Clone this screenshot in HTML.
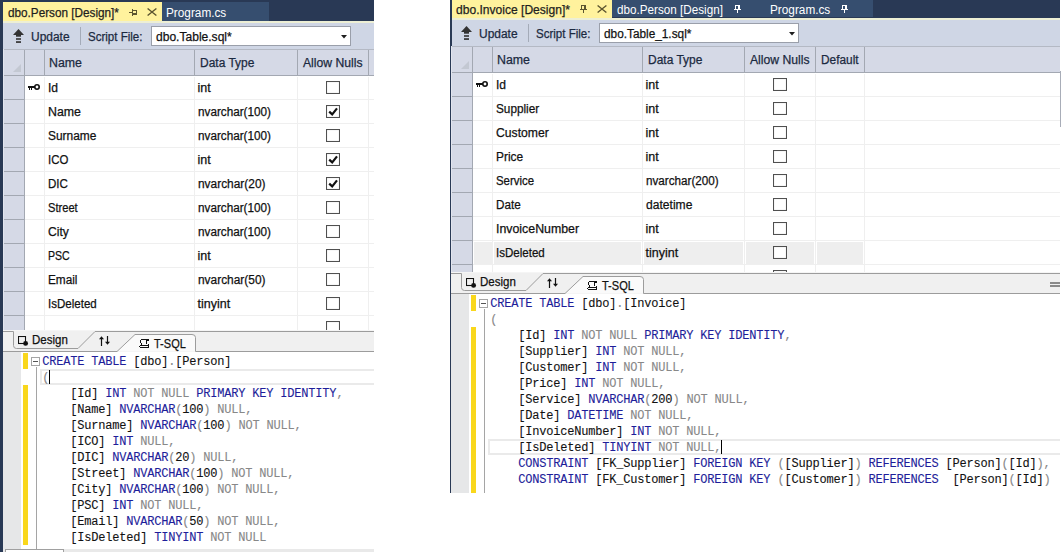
<!DOCTYPE html>
<html><head><meta charset="utf-8"><style>
html,body{margin:0;padding:0;background:#fff;}
body{width:1061px;height:552px;position:relative;overflow:hidden;}
body>div,body>svg{position:absolute;}
.t{white-space:pre;transform-origin:0 0;-webkit-text-stroke:0.25px currentColor;}
.c{white-space:pre;font-family:'Liberation Mono', monospace;font-size:12px;letter-spacing:-0.2px;line-height:16px;height:16px;-webkit-text-stroke:0.1px currentColor;}
</style></head><body>
<div style="left:0px;top:0px;width:374px;height:552px;background:#293955;"></div>
<div style="left:3px;top:2px;width:159px;height:21px;background:#FFF29D;"></div>
<div style="left:3px;top:21px;width:371px;height:2px;background:#EDEFD5;"></div>
<div class="t" style="left:7.5px;top:7.42px;font-size:12.5px;line-height:12.5px;color:#1E1E1E;font-family:'Liberation Sans', sans-serif;transform:scaleX(0.939);">dbo.Person [Design]*</div>
<svg style="left:129px;top:9px" width="8" height="7" viewBox="0 0 8 7" shape-rendering="crispEdges" fill="#5C5530"><rect x="0" y="3" width="3" height="1"/><rect x="3" y="0" width="1" height="7"/><rect x="4" y="1" width="4" height="1"/><rect x="7" y="1" width="1" height="5"/><rect x="4" y="4" width="4" height="2"/></svg>
<svg style="left:147px;top:8px" width="10" height="8" viewBox="0 0 10 8"><path d="M0.6 0.5 L9.4 7.5 M9.4 0.5 L0.6 7.5" fill="none" stroke="#5C5530" stroke-width="1.35"/></svg>
<div style="left:162px;top:2px;width:107px;height:19px;background:#364E6F;"></div>
<div class="t" style="left:165.8px;top:7.42px;font-size:12.5px;line-height:12.5px;color:#FFFFFF;font-family:'Liberation Sans', sans-serif;transform:scaleX(0.943);-webkit-text-stroke:0">Program.cs</div>
<div style="left:3px;top:23px;width:371px;height:26px;background:#CFD6E5;"></div>
<svg style="left:13px;top:29px" width="12" height="15" viewBox="0 0 12 15"><path d="M5.5 0 L11 6 L0 6 Z" fill="#333"/><rect x="3" y="5.5" width="5" height="2.2" fill="#333"/><rect x="3" y="9.2" width="5" height="1.6" fill="#333"/><rect x="3" y="12.2" width="5" height="1.7" fill="#333"/></svg>
<div class="t" style="left:30.7px;top:31.42px;font-size:12.5px;line-height:12.5px;color:#1B2940;font-family:'Liberation Sans', sans-serif;transform:scaleX(0.956);">Update</div>
<div style="left:80px;top:27px;width:1px;height:18px;background:#A4ABB8;"></div>
<div class="t" style="left:88.4px;top:31.42px;font-size:12.5px;line-height:12.5px;color:#1B2940;font-family:'Liberation Sans', sans-serif;transform:scaleX(0.923);">Script File:</div>
<div style="left:151px;top:26px;width:200px;height:20px;background:#fff;border:1px solid #9A9FAA;box-sizing:border-box"></div>
<div class="t" style="left:155.5px;top:31.42px;font-size:12.5px;line-height:12.5px;color:#111;font-family:'Liberation Sans', sans-serif;transform:scaleX(0.964);">dbo.Table.sql*</div>
<svg style="left:341px;top:35px" width="6" height="3.5" viewBox="0 0 6 3.5"><path d="M0 0 H6 L3 3.5 Z" fill="#1E1E1E"/></svg>
<div style="left:3px;top:49px;width:371px;height:27px;background:#D5D9E6;"></div>
<div style="left:3px;top:49px;width:371px;height:1px;background:#B4B9C4;"></div>
<div style="left:3px;top:75px;width:371px;height:1px;background:#A3A8B2;"></div>
<div style="left:3px;top:76px;width:371px;height:254px;background:#fff;"></div>
<div style="left:3px;top:76px;width:21px;height:254px;background:#D5D9E6;"></div>
<div style="left:24px;top:50px;width:1px;height:280px;background:#A3A8B2;"></div>
<div style="left:44px;top:50px;width:1px;height:25px;background:#A3A8B2;"></div>
<svg style="left:13px;top:64px" width="8" height="8" viewBox="0 0 8 8"><path d="M8 0 V8 H0 Z" fill="#C3C8D2"/></svg>
<div style="left:194px;top:50px;width:1px;height:25px;background:#A3A8B2;"></div>
<div style="left:194px;top:77px;width:1px;height:253px;background:#EFEFEF;"></div>
<div class="t" style="left:49.2px;top:57.12px;font-size:12.5px;line-height:12.5px;color:#1B2940;font-family:'Liberation Sans', sans-serif;transform:scaleX(0.988);">Name</div>
<div style="left:297px;top:50px;width:1px;height:25px;background:#A3A8B2;"></div>
<div style="left:297px;top:77px;width:1px;height:253px;background:#EFEFEF;"></div>
<div class="t" style="left:199.6px;top:57.12px;font-size:12.5px;line-height:12.5px;color:#1B2940;font-family:'Liberation Sans', sans-serif;transform:scaleX(0.958);">Data Type</div>
<div style="left:368px;top:50px;width:1px;height:25px;background:#A3A8B2;"></div>
<div style="left:368px;top:77px;width:1px;height:253px;background:#EFEFEF;"></div>
<div class="t" style="left:302.5px;top:57.12px;font-size:12.5px;line-height:12.5px;color:#1B2940;font-family:'Liberation Sans', sans-serif;transform:scaleX(0.974);">Allow Nulls</div>
<div style="left:44px;top:77px;width:1px;height:253px;background:#EFEFEF;"></div>
<div style="left:3px;top:99px;width:21px;height:1px;background:#A3A8B2;"></div>
<div style="left:25px;top:99px;width:349px;height:1px;background:#EFEFEF;"></div>
<div style="left:3px;top:123px;width:21px;height:1px;background:#A3A8B2;"></div>
<div style="left:25px;top:123px;width:349px;height:1px;background:#EFEFEF;"></div>
<div style="left:3px;top:147px;width:21px;height:1px;background:#A3A8B2;"></div>
<div style="left:25px;top:147px;width:349px;height:1px;background:#EFEFEF;"></div>
<div style="left:3px;top:171px;width:21px;height:1px;background:#A3A8B2;"></div>
<div style="left:25px;top:171px;width:349px;height:1px;background:#EFEFEF;"></div>
<div style="left:3px;top:195px;width:21px;height:1px;background:#A3A8B2;"></div>
<div style="left:25px;top:195px;width:349px;height:1px;background:#EFEFEF;"></div>
<div style="left:3px;top:219px;width:21px;height:1px;background:#A3A8B2;"></div>
<div style="left:25px;top:219px;width:349px;height:1px;background:#EFEFEF;"></div>
<div style="left:3px;top:243px;width:21px;height:1px;background:#A3A8B2;"></div>
<div style="left:25px;top:243px;width:349px;height:1px;background:#EFEFEF;"></div>
<div style="left:3px;top:267px;width:21px;height:1px;background:#A3A8B2;"></div>
<div style="left:25px;top:267px;width:349px;height:1px;background:#EFEFEF;"></div>
<div style="left:3px;top:291px;width:21px;height:1px;background:#A3A8B2;"></div>
<div style="left:25px;top:291px;width:349px;height:1px;background:#EFEFEF;"></div>
<div style="left:3px;top:315px;width:21px;height:1px;background:#A3A8B2;"></div>
<div style="left:25px;top:315px;width:349px;height:1px;background:#EFEFEF;"></div>
<svg style="left:28px;top:84px" width="13" height="7" viewBox="0 0 13 7"><rect x="0" y="2" width="7" height="2" fill="#111"/><rect x="1" y="4" width="1" height="2" fill="#111"/><rect x="3" y="4" width="1" height="2" fill="#111"/><circle cx="9" cy="3" r="2.2" fill="none" stroke="#111" stroke-width="1.6"/></svg>
<div class="t" style="left:47.8px;top:81.52px;font-size:12.5px;line-height:12.5px;color:#111;font-family:'Liberation Sans', sans-serif;transform:scaleX(0.967);">Id</div>
<div class="t" style="left:197.5px;top:81.52px;font-size:12.5px;line-height:12.5px;color:#111;font-family:'Liberation Sans', sans-serif;transform:scaleX(1.0);">int</div>
<svg style="left:326px;top:81px" width="14" height="13" viewBox="0 0 14 13"><rect x="0.5" y="0.5" width="13" height="12" fill="#fff" stroke="#505050" stroke-width="1.1"/></svg>
<div class="t" style="left:47.8px;top:105.52px;font-size:12.5px;line-height:12.5px;color:#111;font-family:'Liberation Sans', sans-serif;transform:scaleX(0.988);">Name</div>
<div class="t" style="left:197.5px;top:105.52px;font-size:12.5px;line-height:12.5px;color:#111;font-family:'Liberation Sans', sans-serif;transform:scaleX(0.938);">nvarchar(100)</div>
<svg style="left:326px;top:105px" width="14" height="13" viewBox="0 0 14 13"><rect x="0.5" y="0.5" width="13" height="12" fill="#fff" stroke="#505050" stroke-width="1.1"/><path d="M3.2 6.6 L6.2 9.4 L11 3.4" fill="none" stroke="#111" stroke-width="2.2"/></svg>
<div class="t" style="left:47.8px;top:129.52px;font-size:12.5px;line-height:12.5px;color:#111;font-family:'Liberation Sans', sans-serif;transform:scaleX(0.953);">Surname</div>
<div class="t" style="left:197.5px;top:129.52px;font-size:12.5px;line-height:12.5px;color:#111;font-family:'Liberation Sans', sans-serif;transform:scaleX(0.938);">nvarchar(100)</div>
<svg style="left:326px;top:129px" width="14" height="13" viewBox="0 0 14 13"><rect x="0.5" y="0.5" width="13" height="12" fill="#fff" stroke="#505050" stroke-width="1.1"/></svg>
<div class="t" style="left:47.8px;top:153.52px;font-size:12.5px;line-height:12.5px;color:#111;font-family:'Liberation Sans', sans-serif;transform:scaleX(0.914);">ICO</div>
<div class="t" style="left:197.5px;top:153.52px;font-size:12.5px;line-height:12.5px;color:#111;font-family:'Liberation Sans', sans-serif;transform:scaleX(1.0);">int</div>
<svg style="left:326px;top:153px" width="14" height="13" viewBox="0 0 14 13"><rect x="0.5" y="0.5" width="13" height="12" fill="#fff" stroke="#505050" stroke-width="1.1"/><path d="M3.2 6.6 L6.2 9.4 L11 3.4" fill="none" stroke="#111" stroke-width="2.2"/></svg>
<div class="t" style="left:47.8px;top:177.52px;font-size:12.5px;line-height:12.5px;color:#111;font-family:'Liberation Sans', sans-serif;transform:scaleX(0.925);">DIC</div>
<div class="t" style="left:197.5px;top:177.52px;font-size:12.5px;line-height:12.5px;color:#111;font-family:'Liberation Sans', sans-serif;transform:scaleX(0.952);">nvarchar(20)</div>
<svg style="left:326px;top:177px" width="14" height="13" viewBox="0 0 14 13"><rect x="0.5" y="0.5" width="13" height="12" fill="#fff" stroke="#505050" stroke-width="1.1"/><path d="M3.2 6.6 L6.2 9.4 L11 3.4" fill="none" stroke="#111" stroke-width="2.2"/></svg>
<div class="t" style="left:47.8px;top:201.52px;font-size:12.5px;line-height:12.5px;color:#111;font-family:'Liberation Sans', sans-serif;transform:scaleX(0.891);">Street</div>
<div class="t" style="left:197.5px;top:201.52px;font-size:12.5px;line-height:12.5px;color:#111;font-family:'Liberation Sans', sans-serif;transform:scaleX(0.938);">nvarchar(100)</div>
<svg style="left:326px;top:201px" width="14" height="13" viewBox="0 0 14 13"><rect x="0.5" y="0.5" width="13" height="12" fill="#fff" stroke="#505050" stroke-width="1.1"/></svg>
<div class="t" style="left:47.8px;top:225.52px;font-size:12.5px;line-height:12.5px;color:#111;font-family:'Liberation Sans', sans-serif;transform:scaleX(0.967);">City</div>
<div class="t" style="left:197.5px;top:225.52px;font-size:12.5px;line-height:12.5px;color:#111;font-family:'Liberation Sans', sans-serif;transform:scaleX(0.938);">nvarchar(100)</div>
<svg style="left:326px;top:225px" width="14" height="13" viewBox="0 0 14 13"><rect x="0.5" y="0.5" width="13" height="12" fill="#fff" stroke="#505050" stroke-width="1.1"/></svg>
<div class="t" style="left:47.8px;top:249.52px;font-size:12.5px;line-height:12.5px;color:#111;font-family:'Liberation Sans', sans-serif;transform:scaleX(0.846);">PSC</div>
<div class="t" style="left:197.5px;top:249.52px;font-size:12.5px;line-height:12.5px;color:#111;font-family:'Liberation Sans', sans-serif;transform:scaleX(1.0);">int</div>
<svg style="left:326px;top:249px" width="14" height="13" viewBox="0 0 14 13"><rect x="0.5" y="0.5" width="13" height="12" fill="#fff" stroke="#505050" stroke-width="1.1"/></svg>
<div class="t" style="left:47.8px;top:273.52px;font-size:12.5px;line-height:12.5px;color:#111;font-family:'Liberation Sans', sans-serif;transform:scaleX(0.943);">Email</div>
<div class="t" style="left:197.5px;top:273.52px;font-size:12.5px;line-height:12.5px;color:#111;font-family:'Liberation Sans', sans-serif;transform:scaleX(0.952);">nvarchar(50)</div>
<svg style="left:326px;top:273px" width="14" height="13" viewBox="0 0 14 13"><rect x="0.5" y="0.5" width="13" height="12" fill="#fff" stroke="#505050" stroke-width="1.1"/></svg>
<div class="t" style="left:47.8px;top:297.52px;font-size:12.5px;line-height:12.5px;color:#111;font-family:'Liberation Sans', sans-serif;transform:scaleX(0.924);">IsDeleted</div>
<div class="t" style="left:197.5px;top:297.52px;font-size:12.5px;line-height:12.5px;color:#111;font-family:'Liberation Sans', sans-serif;transform:scaleX(1.0);">tinyint</div>
<svg style="left:326px;top:297px" width="14" height="13" viewBox="0 0 14 13"><rect x="0.5" y="0.5" width="13" height="12" fill="#fff" stroke="#505050" stroke-width="1.1"/></svg>
<svg style="left:326px;top:321px" width="14" height="9" viewBox="0 0 14 9"><rect x="0.5" y="0.5" width="13" height="12" fill="#fff" stroke="#505050" stroke-width="1.1"/></svg>
<svg style="left:3px;top:330px" width="371" height="22" viewBox="0 0 371 22"><rect x="0" y="0" width="371" height="22" fill="#F0F0F0"/><rect x="0" y="0" width="371" height="1" fill="#F5F5F5"/><path d="M114 21.5 L132 4.5 H189 Q192 4.5 192 7.5 V21.5 Z" fill="#FAFAFA" stroke="none"/><path d="M0 1.5 H10.5 V15.5 Q10.5 18.5 13.5 18.5 H75 L92 1.5 H371" fill="none" stroke="#9C9C9C" stroke-width="1"/><path d="M0 21.5 H114 L132 4.5 H189 Q192.5 4.5 192.5 7.5 V21.5 H371" fill="none" stroke="#9C9C9C" stroke-width="1"/></svg>
<svg style="left:18px;top:336px" width="11" height="11" viewBox="0 0 11 11"><rect x="0.5" y="0.5" width="7" height="7" fill="none" stroke="#111" stroke-width="1.1"/><circle cx="7.6" cy="7.4" r="2.45" fill="#111"/></svg>
<div class="t" style="left:31.5px;top:333.92px;font-size:12.5px;line-height:12.5px;color:#111;font-family:'Liberation Sans', sans-serif;transform:scaleX(0.92);">Design</div>
<svg style="left:98px;top:335px" width="12" height="11" viewBox="0 0 12 11"><path d="M3.5 3 V11" stroke="#111" stroke-width="1.2"/><path d="M1 4.2 L3.5 1.2 L6 4.2 Z" fill="#111"/><path d="M9.5 1 V8" stroke="#111" stroke-width="1.2"/><path d="M7 6.8 L9.5 9.8 L12 6.8 Z" fill="#111"/></svg>
<svg style="left:139px;top:339px" width="11" height="9" viewBox="0 0 11 9" shape-rendering="crispEdges" fill="#111"><rect x="2" y="0" width="8" height="1"/><rect x="1" y="1" width="1" height="3"/><rect x="2" y="4" width="1" height="2"/><rect x="7" y="1" width="1" height="4"/><rect x="8" y="1" width="2" height="1"/><rect x="9" y="5" width="1" height="3"/><rect x="1" y="6" width="8" height="1"/><rect x="0" y="7" width="1" height="1"/><rect x="1" y="8" width="9" height="1"/></svg>
<div class="t" style="left:153.5px;top:337.92px;font-size:12.5px;line-height:12.5px;color:#111;font-family:'Liberation Sans', sans-serif;transform:scaleX(0.881);">T-SQL</div>
<div style="left:3px;top:49px;width:1px;height:281px;background:#E2E5EE;"></div>
<div style="left:3px;top:352px;width:371px;height:197px;background:#fff;"></div>
<div style="left:3px;top:352px;width:18px;height:197px;background:#E6E7E8;"></div>
<div style="left:40px;top:369px;width:334px;height:16px;background:transparent;border:2px solid #EAEAEA;border-right:none;box-sizing:border-box"></div>
<div style="left:23px;top:353px;width:5px;height:16px;background:#F9D71C;"></div>
<div style="left:23px;top:385px;width:5px;height:160px;background:#F9D71C;"></div>
<svg style="left:31px;top:357px" width="9" height="192" viewBox="0 0 9 192"><rect x="0.5" y="0.5" width="8" height="8" fill="#fff" stroke="#A5A5A5"/><rect x="2" y="4" width="5" height="1" fill="#555"/><rect x="5" y="10" width="1" height="182" fill="#A5A5A5"/></svg>
<div class="c" style="left:42.3px;top:354.2px"><span style="color:#1E1E9A">CREATE TABLE </span><span style="color:#111111">[dbo]</span><span style="color:#888888">.</span><span style="color:#111111">[Person]</span></div>
<div class="c" style="left:42.3px;top:370.2px"><span style="color:#888888">(</span></div>
<div class="c" style="left:42.3px;top:386.2px"><span style="color:#111111">    [Id] </span><span style="color:#1E1E9A">INT </span><span style="color:#888888">NOT NULL </span><span style="color:#1E1E9A">PRIMARY KEY IDENTITY</span><span style="color:#888888">,</span></div>
<div class="c" style="left:42.3px;top:402.2px"><span style="color:#111111">    [Name] </span><span style="color:#1E1E9A">NVARCHAR</span><span style="color:#888888">(</span><span style="color:#111111">100</span><span style="color:#888888">) NULL,</span></div>
<div class="c" style="left:42.3px;top:418.2px"><span style="color:#111111">    [Surname] </span><span style="color:#1E1E9A">NVARCHAR</span><span style="color:#888888">(</span><span style="color:#111111">100</span><span style="color:#888888">) NOT NULL,</span></div>
<div class="c" style="left:42.3px;top:434.2px"><span style="color:#111111">    [ICO] </span><span style="color:#1E1E9A">INT </span><span style="color:#888888">NULL,</span></div>
<div class="c" style="left:42.3px;top:450.2px"><span style="color:#111111">    [DIC] </span><span style="color:#1E1E9A">NVARCHAR</span><span style="color:#888888">(</span><span style="color:#111111">20</span><span style="color:#888888">) NULL,</span></div>
<div class="c" style="left:42.3px;top:466.2px"><span style="color:#111111">    [Street] </span><span style="color:#1E1E9A">NVARCHAR</span><span style="color:#888888">(</span><span style="color:#111111">100</span><span style="color:#888888">) NOT NULL,</span></div>
<div class="c" style="left:42.3px;top:482.2px"><span style="color:#111111">    [City] </span><span style="color:#1E1E9A">NVARCHAR</span><span style="color:#888888">(</span><span style="color:#111111">100</span><span style="color:#888888">) NOT NULL,</span></div>
<div class="c" style="left:42.3px;top:498.2px"><span style="color:#111111">    [PSC] </span><span style="color:#1E1E9A">INT </span><span style="color:#888888">NOT NULL,</span></div>
<div class="c" style="left:42.3px;top:514.2px"><span style="color:#111111">    [Email] </span><span style="color:#1E1E9A">NVARCHAR</span><span style="color:#888888">(</span><span style="color:#111111">50</span><span style="color:#888888">) NOT NULL,</span></div>
<div class="c" style="left:42.3px;top:530.2px"><span style="color:#111111">    [IsDeleted] </span><span style="color:#1E1E9A">TINYINT </span><span style="color:#888888">NOT NULL</span></div>
<div style="left:49.3px;top:370px;width:1px;height:14px;background:#000;"></div>
<div style="left:3px;top:549px;width:371px;height:3px;background:#E9E9E9;"></div>
<div style="left:5px;top:549px;width:59px;height:3px;background:#fff;border:1px solid #A0A0A0;border-bottom:none;box-sizing:border-box"></div>
<div style="left:450px;top:0px;width:610px;height:493px;background:#293955;"></div>
<div style="left:1060px;top:0px;width:1px;height:552px;background:#fff;"></div>
<div style="left:452px;top:0px;width:160px;height:18px;background:#FFF29D;"></div>
<div style="left:452px;top:18px;width:608px;height:2px;background:#EDEFD5;"></div>
<div class="t" style="left:455.5px;top:4.42px;font-size:12.5px;line-height:12.5px;color:#1E1E1E;font-family:'Liberation Sans', sans-serif;transform:scaleX(0.965);">dbo.Invoice [Design]*</div>
<svg style="left:580px;top:5px" width="7" height="8" viewBox="0 0 7 8" shape-rendering="crispEdges" fill="#5C5530"><rect x="1" y="0" width="5" height="1"/><rect x="1" y="0" width="1" height="4"/><rect x="4" y="0" width="2" height="4"/><rect x="0" y="4" width="7" height="1"/><rect x="3" y="5" width="1" height="3"/></svg>
<svg style="left:597px;top:5px" width="10" height="8" viewBox="0 0 10 8"><path d="M0.6 0.5 L9.4 7.5 M9.4 0.5 L0.6 7.5" fill="none" stroke="#5C5530" stroke-width="1.35"/></svg>
<div style="left:612px;top:0px;width:261px;height:17px;background:#364E6F;"></div>
<div class="t" style="left:617.0px;top:4.42px;font-size:12.5px;line-height:12.5px;color:#FFFFFF;font-family:'Liberation Sans', sans-serif;transform:scaleX(0.935);-webkit-text-stroke:0">dbo.Person [Design]</div>
<svg style="left:734px;top:5px" width="7" height="8" viewBox="0 0 7 8" shape-rendering="crispEdges" fill="#FFFFFF"><rect x="1" y="0" width="5" height="1"/><rect x="1" y="0" width="1" height="4"/><rect x="4" y="0" width="2" height="4"/><rect x="0" y="4" width="7" height="1"/><rect x="3" y="5" width="1" height="3"/></svg>
<div class="t" style="left:769.8px;top:4.42px;font-size:12.5px;line-height:12.5px;color:#FFFFFF;font-family:'Liberation Sans', sans-serif;transform:scaleX(0.943);-webkit-text-stroke:0">Program.cs</div>
<svg style="left:841px;top:5px" width="7" height="8" viewBox="0 0 7 8" shape-rendering="crispEdges" fill="#FFFFFF"><rect x="1" y="0" width="5" height="1"/><rect x="1" y="0" width="1" height="4"/><rect x="4" y="0" width="2" height="4"/><rect x="0" y="4" width="7" height="1"/><rect x="3" y="5" width="1" height="3"/></svg>
<div style="left:452px;top:20px;width:608px;height:26px;background:#CFD6E5;"></div>
<svg style="left:461px;top:26px" width="12" height="15" viewBox="0 0 12 15"><path d="M5.5 0 L11 6 L0 6 Z" fill="#333"/><rect x="3" y="5.5" width="5" height="2.2" fill="#333"/><rect x="3" y="9.2" width="5" height="1.6" fill="#333"/><rect x="3" y="12.2" width="5" height="1.7" fill="#333"/></svg>
<div class="t" style="left:478.7px;top:28.42px;font-size:12.5px;line-height:12.5px;color:#1B2940;font-family:'Liberation Sans', sans-serif;transform:scaleX(0.956);">Update</div>
<div style="left:528px;top:24px;width:1px;height:18px;background:#A4ABB8;"></div>
<div class="t" style="left:536.4px;top:28.42px;font-size:12.5px;line-height:12.5px;color:#1B2940;font-family:'Liberation Sans', sans-serif;transform:scaleX(0.923);">Script File:</div>
<div style="left:599px;top:23px;width:200px;height:20px;background:#fff;border:1px solid #9A9FAA;box-sizing:border-box"></div>
<div class="t" style="left:603.5px;top:28.42px;font-size:12.5px;line-height:12.5px;color:#111;font-family:'Liberation Sans', sans-serif;transform:scaleX(0.945);">dbo.Table_1.sql*</div>
<svg style="left:789px;top:32px" width="6" height="3.5" viewBox="0 0 6 3.5"><path d="M0 0 H6 L3 3.5 Z" fill="#1E1E1E"/></svg>
<div style="left:451px;top:46px;width:609px;height:27px;background:#D5D9E6;"></div>
<div style="left:451px;top:46px;width:609px;height:1px;background:#B4B9C4;"></div>
<div style="left:451px;top:72px;width:609px;height:1px;background:#A3A8B2;"></div>
<div style="left:451px;top:73px;width:609px;height:199px;background:#fff;"></div>
<div style="left:451px;top:73px;width:21px;height:199px;background:#D5D9E6;"></div>
<div style="left:472px;top:47px;width:1px;height:225px;background:#A3A8B2;"></div>
<div style="left:492px;top:47px;width:1px;height:25px;background:#A3A8B2;"></div>
<svg style="left:461px;top:61px" width="8" height="8" viewBox="0 0 8 8"><path d="M8 0 V8 H0 Z" fill="#C3C8D2"/></svg>
<div style="left:642px;top:47px;width:1px;height:25px;background:#A3A8B2;"></div>
<div style="left:642px;top:74px;width:1px;height:198px;background:#EFEFEF;"></div>
<div class="t" style="left:497.2px;top:54.12px;font-size:12.5px;line-height:12.5px;color:#1B2940;font-family:'Liberation Sans', sans-serif;transform:scaleX(0.988);">Name</div>
<div style="left:744px;top:47px;width:1px;height:25px;background:#A3A8B2;"></div>
<div style="left:744px;top:74px;width:1px;height:198px;background:#EFEFEF;"></div>
<div class="t" style="left:647.6px;top:54.12px;font-size:12.5px;line-height:12.5px;color:#1B2940;font-family:'Liberation Sans', sans-serif;transform:scaleX(0.958);">Data Type</div>
<div style="left:815px;top:47px;width:1px;height:25px;background:#A3A8B2;"></div>
<div style="left:815px;top:74px;width:1px;height:198px;background:#EFEFEF;"></div>
<div class="t" style="left:749.6px;top:54.12px;font-size:12.5px;line-height:12.5px;color:#1B2940;font-family:'Liberation Sans', sans-serif;transform:scaleX(0.974);">Allow Nulls</div>
<div style="left:864px;top:47px;width:1px;height:25px;background:#A3A8B2;"></div>
<div style="left:864px;top:74px;width:1px;height:198px;background:#EFEFEF;"></div>
<div class="t" style="left:820.8px;top:54.12px;font-size:12.5px;line-height:12.5px;color:#1B2940;font-family:'Liberation Sans', sans-serif;transform:scaleX(0.949);">Default</div>
<div style="left:492px;top:74px;width:1px;height:198px;background:#EFEFEF;"></div>
<div style="left:451px;top:96px;width:21px;height:1px;background:#A3A8B2;"></div>
<div style="left:473px;top:96px;width:587px;height:1px;background:#EFEFEF;"></div>
<div style="left:451px;top:120px;width:21px;height:1px;background:#A3A8B2;"></div>
<div style="left:473px;top:120px;width:587px;height:1px;background:#EFEFEF;"></div>
<div style="left:451px;top:144px;width:21px;height:1px;background:#A3A8B2;"></div>
<div style="left:473px;top:144px;width:587px;height:1px;background:#EFEFEF;"></div>
<div style="left:451px;top:168px;width:21px;height:1px;background:#A3A8B2;"></div>
<div style="left:473px;top:168px;width:587px;height:1px;background:#EFEFEF;"></div>
<div style="left:451px;top:192px;width:21px;height:1px;background:#A3A8B2;"></div>
<div style="left:473px;top:192px;width:587px;height:1px;background:#EFEFEF;"></div>
<div style="left:451px;top:216px;width:21px;height:1px;background:#A3A8B2;"></div>
<div style="left:473px;top:216px;width:587px;height:1px;background:#EFEFEF;"></div>
<div style="left:451px;top:240px;width:21px;height:1px;background:#A3A8B2;"></div>
<div style="left:473px;top:240px;width:587px;height:1px;background:#EFEFEF;"></div>
<div style="left:451px;top:264px;width:21px;height:1px;background:#A3A8B2;"></div>
<div style="left:473px;top:264px;width:587px;height:1px;background:#EFEFEF;"></div>
<svg style="left:476px;top:81px" width="13" height="7" viewBox="0 0 13 7"><rect x="0" y="2" width="7" height="2" fill="#111"/><rect x="1" y="4" width="1" height="2" fill="#111"/><rect x="3" y="4" width="1" height="2" fill="#111"/><circle cx="9" cy="3" r="2.2" fill="none" stroke="#111" stroke-width="1.6"/></svg>
<div class="t" style="left:495.8px;top:78.52px;font-size:12.5px;line-height:12.5px;color:#111;font-family:'Liberation Sans', sans-serif;transform:scaleX(0.967);">Id</div>
<div class="t" style="left:645.5px;top:78.52px;font-size:12.5px;line-height:12.5px;color:#111;font-family:'Liberation Sans', sans-serif;transform:scaleX(1.0);">int</div>
<svg style="left:773px;top:78px" width="14" height="13" viewBox="0 0 14 13"><rect x="0.5" y="0.5" width="13" height="12" fill="#fff" stroke="#505050" stroke-width="1.1"/></svg>
<div class="t" style="left:495.8px;top:102.52px;font-size:12.5px;line-height:12.5px;color:#111;font-family:'Liberation Sans', sans-serif;transform:scaleX(0.942);">Supplier</div>
<div class="t" style="left:645.5px;top:102.52px;font-size:12.5px;line-height:12.5px;color:#111;font-family:'Liberation Sans', sans-serif;transform:scaleX(1.0);">int</div>
<svg style="left:773px;top:102px" width="14" height="13" viewBox="0 0 14 13"><rect x="0.5" y="0.5" width="13" height="12" fill="#fff" stroke="#505050" stroke-width="1.1"/></svg>
<div class="t" style="left:495.8px;top:126.52px;font-size:12.5px;line-height:12.5px;color:#111;font-family:'Liberation Sans', sans-serif;transform:scaleX(0.975);">Customer</div>
<div class="t" style="left:645.5px;top:126.52px;font-size:12.5px;line-height:12.5px;color:#111;font-family:'Liberation Sans', sans-serif;transform:scaleX(1.0);">int</div>
<svg style="left:773px;top:126px" width="14" height="13" viewBox="0 0 14 13"><rect x="0.5" y="0.5" width="13" height="12" fill="#fff" stroke="#505050" stroke-width="1.1"/></svg>
<div class="t" style="left:495.8px;top:150.52px;font-size:12.5px;line-height:12.5px;color:#111;font-family:'Liberation Sans', sans-serif;transform:scaleX(0.952);">Price</div>
<div class="t" style="left:645.5px;top:150.52px;font-size:12.5px;line-height:12.5px;color:#111;font-family:'Liberation Sans', sans-serif;transform:scaleX(1.0);">int</div>
<svg style="left:773px;top:150px" width="14" height="13" viewBox="0 0 14 13"><rect x="0.5" y="0.5" width="13" height="12" fill="#fff" stroke="#505050" stroke-width="1.1"/></svg>
<div class="t" style="left:495.8px;top:174.52px;font-size:12.5px;line-height:12.5px;color:#111;font-family:'Liberation Sans', sans-serif;transform:scaleX(0.912);">Service</div>
<div class="t" style="left:645.5px;top:174.52px;font-size:12.5px;line-height:12.5px;color:#111;font-family:'Liberation Sans', sans-serif;transform:scaleX(0.934);">nvarchar(200)</div>
<svg style="left:773px;top:174px" width="14" height="13" viewBox="0 0 14 13"><rect x="0.5" y="0.5" width="13" height="12" fill="#fff" stroke="#505050" stroke-width="1.1"/></svg>
<div class="t" style="left:495.8px;top:198.52px;font-size:12.5px;line-height:12.5px;color:#111;font-family:'Liberation Sans', sans-serif;transform:scaleX(0.936);">Date</div>
<div class="t" style="left:645.5px;top:198.52px;font-size:12.5px;line-height:12.5px;color:#111;font-family:'Liberation Sans', sans-serif;transform:scaleX(0.967);">datetime</div>
<svg style="left:773px;top:198px" width="14" height="13" viewBox="0 0 14 13"><rect x="0.5" y="0.5" width="13" height="12" fill="#fff" stroke="#505050" stroke-width="1.1"/></svg>
<div class="t" style="left:495.8px;top:222.52px;font-size:12.5px;line-height:12.5px;color:#111;font-family:'Liberation Sans', sans-serif;transform:scaleX(0.988);">InvoiceNumber</div>
<div class="t" style="left:645.5px;top:222.52px;font-size:12.5px;line-height:12.5px;color:#111;font-family:'Liberation Sans', sans-serif;transform:scaleX(1.0);">int</div>
<svg style="left:773px;top:222px" width="14" height="13" viewBox="0 0 14 13"><rect x="0.5" y="0.5" width="13" height="12" fill="#fff" stroke="#505050" stroke-width="1.1"/></svg>
<div style="left:474px;top:242px;width:18px;height:22px;background:#EEEEEE;"></div>
<div style="left:494px;top:242px;width:147px;height:22px;background:#EEEEEE;"></div>
<div style="left:644px;top:242px;width:99px;height:22px;background:#EEEEEE;"></div>
<div style="left:746px;top:242px;width:68px;height:22px;background:#EEEEEE;"></div>
<div style="left:817px;top:242px;width:46px;height:22px;background:#EEEEEE;"></div>
<div class="t" style="left:495.8px;top:246.52px;font-size:12.5px;line-height:12.5px;color:#111;font-family:'Liberation Sans', sans-serif;transform:scaleX(0.924);">IsDeleted</div>
<div class="t" style="left:645.5px;top:246.52px;font-size:12.5px;line-height:12.5px;color:#111;font-family:'Liberation Sans', sans-serif;transform:scaleX(1.0);">tinyint</div>
<svg style="left:773px;top:246px" width="14" height="13" viewBox="0 0 14 13"><rect x="0.5" y="0.5" width="13" height="12" fill="#fff" stroke="#505050" stroke-width="1.1"/></svg>
<svg style="left:773px;top:270px" width="14" height="2" viewBox="0 0 14 2"><rect x="0.5" y="0.5" width="13" height="12" fill="#fff" stroke="#505050" stroke-width="1.1"/></svg>
<svg style="left:451px;top:272px" width="609" height="22" viewBox="0 0 609 22"><rect x="0" y="0" width="609" height="22" fill="#F0F0F0"/><rect x="0" y="0" width="609" height="1" fill="#F5F5F5"/><path d="M114 21.5 L132 4.5 H189 Q192 4.5 192 7.5 V21.5 Z" fill="#FAFAFA" stroke="none"/><path d="M0 1.5 H10.5 V15.5 Q10.5 18.5 13.5 18.5 H75 L92 1.5 H609" fill="none" stroke="#9C9C9C" stroke-width="1"/><path d="M0 21.5 H114 L132 4.5 H189 Q192.5 4.5 192.5 7.5 V21.5 H609" fill="none" stroke="#9C9C9C" stroke-width="1"/></svg>
<svg style="left:466px;top:278px" width="11" height="11" viewBox="0 0 11 11"><rect x="0.5" y="0.5" width="7" height="7" fill="none" stroke="#111" stroke-width="1.1"/><circle cx="7.6" cy="7.4" r="2.45" fill="#111"/></svg>
<div class="t" style="left:479.5px;top:275.92px;font-size:12.5px;line-height:12.5px;color:#111;font-family:'Liberation Sans', sans-serif;transform:scaleX(0.92);">Design</div>
<svg style="left:546px;top:277px" width="12" height="11" viewBox="0 0 12 11"><path d="M3.5 3 V11" stroke="#111" stroke-width="1.2"/><path d="M1 4.2 L3.5 1.2 L6 4.2 Z" fill="#111"/><path d="M9.5 1 V8" stroke="#111" stroke-width="1.2"/><path d="M7 6.8 L9.5 9.8 L12 6.8 Z" fill="#111"/></svg>
<svg style="left:587px;top:281px" width="11" height="9" viewBox="0 0 11 9" shape-rendering="crispEdges" fill="#111"><rect x="2" y="0" width="8" height="1"/><rect x="1" y="1" width="1" height="3"/><rect x="2" y="4" width="1" height="2"/><rect x="7" y="1" width="1" height="4"/><rect x="8" y="1" width="2" height="1"/><rect x="9" y="5" width="1" height="3"/><rect x="1" y="6" width="8" height="1"/><rect x="0" y="7" width="1" height="1"/><rect x="1" y="8" width="9" height="1"/></svg>
<div class="t" style="left:601.5px;top:279.92px;font-size:12.5px;line-height:12.5px;color:#111;font-family:'Liberation Sans', sans-serif;transform:scaleX(0.881);">T-SQL</div>
<div style="left:451px;top:46px;width:1px;height:226px;background:#E2E5EE;"></div>
<div style="left:1050px;top:282px;width:10px;height:1.5px;background:#8A8A8A;"></div>
<div style="left:1060px;top:71px;width:1px;height:56px;background:#A8ADB8;"></div>
<div style="left:1050px;top:285px;width:10px;height:1.5px;background:#8A8A8A;"></div>
<div style="left:451px;top:294px;width:609px;height:199px;background:#fff;"></div>
<div style="left:451px;top:294px;width:18px;height:199px;background:#E6E7E8;"></div>
<div style="left:488px;top:439px;width:572px;height:16px;background:transparent;border:2px solid #EAEAEA;border-right:none;box-sizing:border-box"></div>
<div style="left:471px;top:295px;width:5px;height:16px;background:#F9D71C;"></div>
<div style="left:471px;top:327px;width:5px;height:166px;background:#F9D71C;"></div>
<svg style="left:479px;top:299px" width="9" height="194" viewBox="0 0 9 194"><rect x="0.5" y="0.5" width="8" height="8" fill="#fff" stroke="#A5A5A5"/><rect x="2" y="4" width="5" height="1" fill="#555"/><rect x="5" y="10" width="1" height="184" fill="#A5A5A5"/></svg>
<div class="c" style="left:490.3px;top:296.2px"><span style="color:#1E1E9A">CREATE TABLE </span><span style="color:#111111">[dbo]</span><span style="color:#888888">.</span><span style="color:#111111">[Invoice]</span></div>
<div class="c" style="left:490.3px;top:312.2px"><span style="color:#888888">(</span></div>
<div class="c" style="left:490.3px;top:328.2px"><span style="color:#111111">    [Id] </span><span style="color:#1E1E9A">INT </span><span style="color:#888888">NOT NULL </span><span style="color:#1E1E9A">PRIMARY KEY IDENTITY</span><span style="color:#888888">,</span></div>
<div class="c" style="left:490.3px;top:344.2px"><span style="color:#111111">    [Supplier] </span><span style="color:#1E1E9A">INT </span><span style="color:#888888">NOT NULL,</span></div>
<div class="c" style="left:490.3px;top:360.2px"><span style="color:#111111">    [Customer] </span><span style="color:#1E1E9A">INT </span><span style="color:#888888">NOT NULL,</span></div>
<div class="c" style="left:490.3px;top:376.2px"><span style="color:#111111">    [Price] </span><span style="color:#1E1E9A">INT </span><span style="color:#888888">NOT NULL,</span></div>
<div class="c" style="left:490.3px;top:392.2px"><span style="color:#111111">    [Service] </span><span style="color:#1E1E9A">NVARCHAR</span><span style="color:#888888">(</span><span style="color:#111111">200</span><span style="color:#888888">) NOT NULL,</span></div>
<div class="c" style="left:490.3px;top:408.2px"><span style="color:#111111">    [Date] </span><span style="color:#1E1E9A">DATETIME </span><span style="color:#888888">NOT NULL,</span></div>
<div class="c" style="left:490.3px;top:424.2px"><span style="color:#111111">    [InvoiceNumber] </span><span style="color:#1E1E9A">INT </span><span style="color:#888888">NOT NULL,</span></div>
<div class="c" style="left:490.3px;top:440.2px"><span style="color:#111111">    [IsDeleted] </span><span style="color:#1E1E9A">TINYINT </span><span style="color:#888888">NOT NULL,</span></div>
<div class="c" style="left:490.3px;top:456.2px"><span style="color:#1E1E9A">    CONSTRAINT </span><span style="color:#111111">[FK_Supplier] </span><span style="color:#1E1E9A">FOREIGN KEY </span><span style="color:#888888">(</span><span style="color:#111111">[Supplier]</span><span style="color:#888888">) </span><span style="color:#1E1E9A">REFERENCES </span><span style="color:#111111">[Person]</span><span style="color:#888888">(</span><span style="color:#111111">[Id]</span><span style="color:#888888">),</span></div>
<div class="c" style="left:490.3px;top:472.2px"><span style="color:#1E1E9A">    CONSTRAINT </span><span style="color:#111111">[FK_Customer] </span><span style="color:#1E1E9A">FOREIGN KEY </span><span style="color:#888888">(</span><span style="color:#111111">[Customer]</span><span style="color:#888888">) </span><span style="color:#1E1E9A">REFERENCES  </span><span style="color:#111111">[Person]</span><span style="color:#888888">(</span><span style="color:#111111">[Id]</span><span style="color:#888888">)</span></div>
<div style="left:721.3px;top:440px;width:1px;height:14px;background:#000;"></div>
</body></html>
